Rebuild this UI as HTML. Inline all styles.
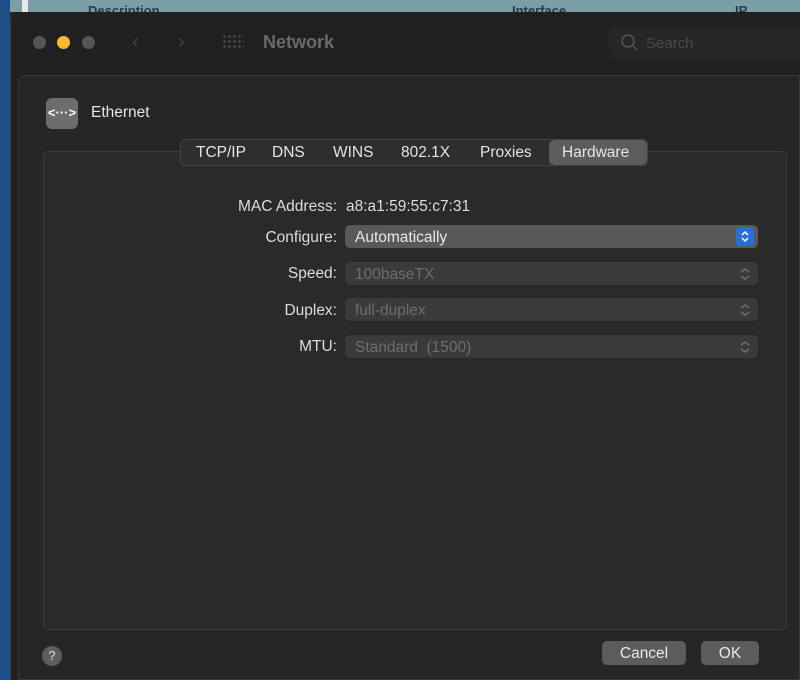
<!DOCTYPE html>
<html><head><style>
*{margin:0;padding:0;box-sizing:border-box}
body{width:800px;height:680px;overflow:hidden;background:#242424;font-family:"Liberation Sans",sans-serif;position:relative}
.abs{position:absolute}
.lbl{position:absolute;right:463px;color:#dcdcdc;font-size:15.5px;text-align:right}
.pop{position:absolute;left:345px;width:413px;height:23px;border-radius:5px;background:#3a3a3a;color:#6e6e6e;font-size:15.5px;padding:4px 0 0 10px}
.chev{position:absolute;right:6px;top:4px}
.tab{position:absolute;top:144px;color:#e4e4e4;font-size:15.5px}
</style></head><body>
<div class="abs" style="left:0;top:0;width:10px;height:680px;background:#1d4f86"></div>
<div class="abs" style="left:10px;top:0;width:790px;height:12px;background:#7aa0a6;overflow:hidden">
<span class="abs" style="left:78px;top:3px;color:#2a3a40;font-size:13px;font-weight:bold">Description</span>
<span class="abs" style="left:502px;top:3px;color:#2a3a40;font-size:13px;font-weight:bold">Interface</span>
<span class="abs" style="left:725px;top:3px;color:#2a3a40;font-size:13px;font-weight:bold">IP address</span>
</div>
<div class="abs" style="left:22px;top:0;width:6px;height:12px;background:#e8e8e8"></div>
<div class="abs" style="left:10px;top:12px;width:790px;height:668px;background:#202020;border-radius:8px 0 0 0;border-left:1px solid #3a3a3a"></div>
<div class="abs" style="left:33px;top:36px;width:13px;height:13px;border-radius:50%;background:#555"></div>
<div class="abs" style="left:57px;top:36px;width:13px;height:13px;border-radius:50%;background:#f5b92e"></div>
<div class="abs" style="left:82px;top:36px;width:13px;height:13px;border-radius:50%;background:#555"></div>
<div class="abs" style="left:132px;top:31px;color:#444;font-size:20px">&#8249;</div>
<div class="abs" style="left:178px;top:31px;color:#444;font-size:20px">&#8250;</div>
<div class="abs" style="left:222px;top:34px;width:22px;height:16px;background:radial-gradient(circle,#4a4a4a 1.2px,transparent 1.5px) 0 0/5px 5px"></div>
<div class="abs" style="left:263px;top:32px;color:#6a6a6a;font-size:18px;font-weight:bold">Network</div>
<div class="abs" style="left:609px;top:26px;width:191px;height:33px;background:#262626;border-radius:6px 0 0 6px"></div>
<svg class="abs" style="left:620px;top:33px" width="20" height="20"><circle cx="8" cy="8" r="6" stroke="#555" stroke-width="1.5" fill="none"/><line x1="12" y1="12" x2="17" y2="17" stroke="#555" stroke-width="1.5"/></svg>
<div class="abs" style="left:646px;top:35px;color:#4a4a4a;font-size:15px">Search</div>
<div class="abs" style="left:18px;top:75px;width:782px;height:605px;background:#262626;border-radius:8px 0 0 0;border:1px solid #383838"></div>
<div class="abs" style="left:46px;top:98px;width:32px;height:31px;border-radius:6px;background:#6d6d6d;color:#fff;font-size:13px;text-align:center;line-height:30px;font-weight:bold">&lt;···&gt;</div>
<div class="abs" style="left:91px;top:104px;color:#e4e4e4;font-size:15.5px">Ethernet</div>
<div class="abs" style="left:43px;top:151px;width:744px;height:479px;background:#2a2a2a;border:1px solid #3c3c3c;border-radius:5px"></div>
<div class="abs" style="left:180px;top:139px;width:468px;height:27px;background:#2e2e2e;border:1px solid #444;border-radius:6px"></div>
<div class="abs" style="left:549px;top:140px;width:98px;height:25px;background:#5c5c5c;border-radius:5px"></div>
<div class="tab" style="left:196px">TCP/IP</div>
<div class="tab" style="left:272px">DNS</div>
<div class="tab" style="left:333px">WINS</div>
<div class="tab" style="left:401px">802.1X</div>
<div class="tab" style="left:480px">Proxies</div>
<div class="tab" style="left:562px">Hardware</div>
<div class="lbl" style="top:198px">MAC Address:</div>
<div class="abs" style="left:346px;top:198px;color:#dcdcdc;font-size:15.5px">a8:a1:59:55:c7:31</div>
<div class="lbl" style="top:229px">Configure:</div>
<div class="pop" style="top:225px;background:#595959;color:#e8e8e8">Automatically<div class="chev" style="right:4px;top:2px;width:18px;height:19px;background:#2a6fd8;border-radius:4px"><svg width="18" height="19"><path d="M6 8l3-3 3 3M6 11l3 3 3-3" stroke="#fff" stroke-width="1.5" fill="none"/></svg></div></div>
<div class="lbl" style="top:265px">Speed:</div>
<div class="pop" style="top:262px">100baseTX<svg class="chev" width="14" height="16"><path d="M3 6l4-3 4 3M3 10l4 3 4-3" stroke="#777" stroke-width="1.3" fill="none"/></svg></div>
<div class="lbl" style="top:302px">Duplex:</div>
<div class="pop" style="top:298px">full-duplex<svg class="chev" width="14" height="16"><path d="M3 6l4-3 4 3M3 10l4 3 4-3" stroke="#777" stroke-width="1.3" fill="none"/></svg></div>
<div class="lbl" style="top:338px">MTU:</div>
<div class="pop" style="top:335px">Standard&nbsp;&nbsp;(1500)<svg class="chev" width="14" height="16"><path d="M3 6l4-3 4 3M3 10l4 3 4-3" stroke="#777" stroke-width="1.3" fill="none"/></svg></div>
<div class="abs" style="left:42px;top:646px;width:20px;height:20px;border-radius:50%;background:#5f5f5f;color:#ddd;font-size:13px;text-align:center;line-height:20px">?</div>
<div class="abs" style="left:602px;top:641px;width:84px;height:24px;border-radius:5px;background:#5c5c5c;color:#e8e8e8;font-size:15.5px;text-align:center;line-height:25px">Cancel</div>
<div class="abs" style="left:701px;top:641px;width:58px;height:24px;border-radius:5px;background:#5c5c5c;color:#e8e8e8;font-size:15.5px;text-align:center;line-height:25px">OK</div>
</body></html>
